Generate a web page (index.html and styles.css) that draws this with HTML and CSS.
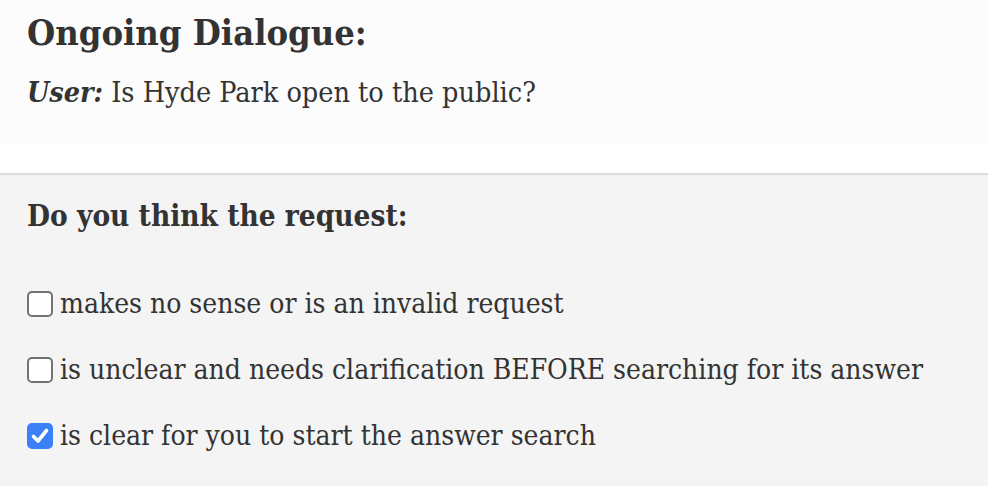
FILE: index.html
```html
<!DOCTYPE html>
<html>
<head>
<meta charset="utf-8">
<link rel="stylesheet" href="styles.css">
</head>
<body>
<div class="dialogue">
  <h2 class="title">Ongoing Dialogue:</h2>
  <p class="turn"><b><i>User:</i></b> Is Hyde Park open to the public?</p>
</div>
<div class="question">
  <h3 class="prompt">Do you think the request:</h3>
  <label class="option"><span class="box"></span><span>makes no sense or is an invalid request</span></label>
  <label class="option"><span class="box"></span><span>is unclear and needs clarification BEFORE searching for its answer</span></label>
  <label class="option"><span class="box checked"><svg viewBox="0 0 26 26" width="26" height="26"><path d="M6.5 13.5 L11 18 L19.5 7.5" fill="none" stroke="#fff" stroke-width="3.6" stroke-linecap="round" stroke-linejoin="round"/></svg></span><span>is clear for you to start the answer search</span></label>
</div>
</body>
</html>
```
FILE: styles.css
```css
html, body {
  margin: 0;
  padding: 0;
  background: #fff;
}
body {
  font-family: "DejaVu Serif Condensed", "DejaVu Serif", Georgia, serif;
  font-stretch: condensed;
  color: #333;
  width: 988px;
  height: 486px;
  overflow: hidden;
  display: flex;
  flex-direction: column;
}
.dialogue {
  background: #fcfcfc;
  height: 144px;
  flex: none;
  padding: 0 27px;
  box-sizing: border-box;
  display: flex;
  flex-direction: column;
}
.title {
  margin: 0;
  padding-top: 9px;
  font-size: 36px;
  line-height: 46px;
  font-weight: bold;
}
.turn {
  margin: 20px 0 0;
  font-size: 28.5px;
  line-height: 34px;
}
.question {
  margin-top: 29px;
  border-top: 2px solid #dcdcdc;
  background: #f4f4f4;
  flex: 1;
  min-height: 0;
  padding: 24px 27px 0;
  display: flex;
  flex-direction: column;
}
.prompt {
  margin: 0 0 38px;
  font-size: 29.5px;
  line-height: 34px;
  font-weight: bold;
}
.option {
  display: flex;
  align-items: center;
  gap: 7px;
  font-size: 28px;
  line-height: 34px;
  height: 66px;
  flex: none;
}
.box {
  width: 26px;
  height: 26px;
  box-sizing: border-box;
  border: 2px solid #727272;
  border-radius: 5px;
  background: #fff;
  flex: none;
  position: relative;
}
.box.checked {
  background: #3b80f7;
  border-color: #3b80f7;
}
.box.checked svg {
  position: absolute;
  left: -2px;
  top: -2px;
}
```
